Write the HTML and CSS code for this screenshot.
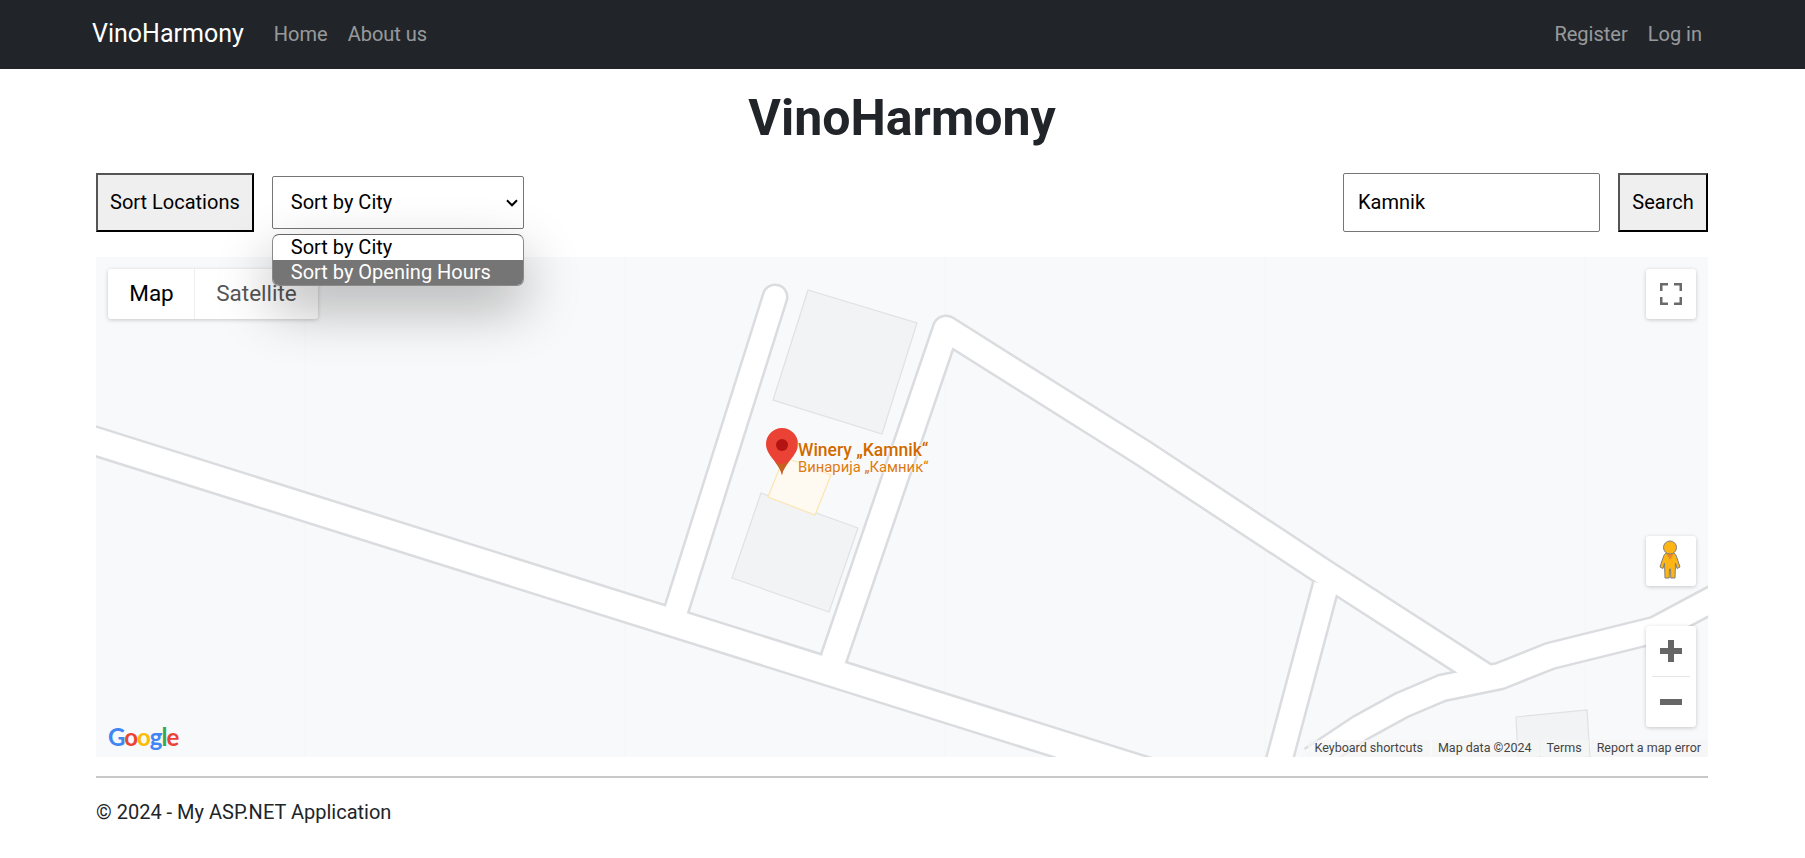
FILE: index.html
```html
<!DOCTYPE html>
<html lang="en">
<head>
  <meta charset="UTF-8" />
  <meta name="viewport" content="width=device-width, initial-scale=1" />
  <title>VinoHarmony</title>
  <link rel="stylesheet" href="styles.css">
</head>
<body>

<nav class="navbar">
  <a class="navbar-brand" href="#">VinoHarmony</a>
  <a class="nav-link" href="#">Home</a>
  <a class="nav-link" href="#">About us</a>
  <span class="nav-spacer"></span>
  <a class="nav-link" href="#">Register</a>
  <a class="nav-link" href="#">Log in</a>
</nav>

<main class="container">
  <h1 class="page-title">VinoHarmony</h1>

  <div class="toolbar">
    <div class="toolbar-group">
      <button class="btn">Sort Locations</button>
      <div class="sort-wrap">
        <select class="sort-select">
          <option>Sort by City</option>
          <option>Sort by Opening Hours</option>
        </select>
        <svg class="sort-chevron" viewBox="0 0 12 8" width="12" height="8">
          <path d="M1 1.300 L6 6.300 L11 1.300" fill="none" stroke="#000" stroke-width="2" />
        </svg>
        <div class="sort-popup">
          <div class="sort-option">Sort by City</div>
          <div class="sort-option active">Sort by Opening Hours</div>
        </div>
      </div>
    </div>
    <div class="toolbar-group search-group">
      <input class="search-input" type="text" value="Kamnik">
      <button class="btn btn-search">Search</button>
    </div>
  </div>

  <div class="map">
    <svg class="map-base" viewBox="96 257 1612 500" width="1612" height="500">
      <defs>
        <g id="roads">
          <path class="road-wide" d="M90 439.500 L1150 772.500" />
          <path class="road-cap" d="M775 297 L676 611" />
          <path class="road-mid" d="M829 672 L946 329 L1143 453 L1325 573 L1488 678" />
          <path class="road-mid" d="M1326 585 L1278 765" />
          <path class="road-mid" d="M1312 760 L1360 728 L1402 705 L1442 688 L1500 676 L1550 656 L1655 630 L1730 590" />
        </g>
      </defs>

      <!-- tile seams -->
      <path class="tile-seam" d="M305 257V757M625 257V757M945 257V757M1265 257V757M1585 257V757" />

      <polygon class="building" points="808,290 917,323 882,434 773,400" />
      <polygon class="building" points="761,493 858,528 829,612 732,578" />
      <polygon class="building" points="1516,717 1587,710 1590,757 1518,757" />
      <polygon class="lot" points="784,457 831,475 815,515 768,497" />

      <use href="#roads" class="roads-edge" />
      <use href="#roads" class="roads-fill" />

      <!-- marker -->
      <path d="M782 475 C780 463 766 456 766 444 A16 16 0 0 1 798 444 C798 456 784 463 782 475Z" fill="#ea4335" />
      <path d="M782 475 C781 470 778 466 775 462 C779 465 785 465 790 460 C787 465 783 469 782 475Z" fill="#c5621f" />
      <circle cx="782" cy="445" r="6" fill="#b31412" />
    </svg>

    <div class="poi-label">
      <div class="poi-name">Winery „Kamnik“</div>
      <div class="poi-sub">Винарија „Камник“</div>
    </div>

    <div class="map-type">
      <div class="map-type-btn selected">Map</div>
      <div class="map-type-btn">Satellite</div>
    </div>

    <div class="map-ctrl fullscreen">
      <svg viewBox="0 0 22 22" width="22" height="22">
        <path d="M1.200 8V1.200H8M14 1.200H20.800V8M20.800 14V20.800H14M8 20.800H1.200V14" fill="none" stroke="#6a6a6a" stroke-width="2.600" />
      </svg>
    </div>

    <div class="map-ctrl pegman">
      <svg viewBox="0 0 24 40" width="24" height="40">
        <path d="M8 13 Q12 11 16 13 Q18 14 19 18 L22 27 L19 28.500 L17.500 23 L17 38 L12.800 38 L12.500 29 L11.500 29 L11.200 38 L7 38 L6.500 23 L5 28.500 L2 27 L5 18 Q6 14 8 13Z" fill="#fdb515" stroke="#7f7f7f" stroke-width="1" />
        <path d="M8.500 14 L15.500 14 L12 20Z" fill="#e8892b" />
        <circle cx="12" cy="7.500" r="6.500" fill="#fdb515" stroke="#7f7f7f" stroke-width="1" />
      </svg>
    </div>

    <div class="map-ctrl zoom-ctrl">
      <button class="zoom-btn" aria-label="Zoom in">
        <svg viewBox="0 0 22 22" width="22" height="22"><path d="M0 8H8V0H14V8H22V14H14V22H8V14H0Z" fill="#666" /></svg>
      </button>
      <div class="zoom-divider"></div>
      <button class="zoom-btn" aria-label="Zoom out">
        <svg viewBox="0 0 22 22" width="22" height="22"><path d="M0 8H22V14H0Z" fill="#666" /></svg>
      </button>
    </div>

    <div class="google-logo"><span class="g-blue">G</span><span class="g-red">o</span><span class="g-yellow">o</span><span class="g-blue">g</span><span class="g-green">l</span><span class="g-red">e</span></div>

    <div class="attribution">
      <span>Keyboard shortcuts</span>
      <span>Map data ©2024</span>
      <span>Terms</span>
      <span>Report a map error</span>
    </div>
  </div>
</main>

<footer class="footer">
  <hr class="footer-rule">
  <div class="footer-text">© 2024 - My ASP.NET Application</div>
</footer>

</body>
</html>
```

FILE: styles.css
```css
* {
  box-sizing: border-box;
}
body {
  margin: 0;
  background-color: #fff;
  color: #212529;
  font-family: Roboto, "Liberation Sans", sans-serif;
  font-size: 20px;
  line-height: 1.5;
}

.navbar {
  display: flex;
  align-items: center;
  height: 69px;
  padding: 0 93px 1px 92px;
  background-color: #212529;
}
.navbar-brand {
  margin-right: 20px;
  color: #fff;
  font-size: 25px;
  text-decoration: none;
}
.nav-link {
  padding: 0 10px;
  color: rgba(255, 255, 255, 0.55);
  text-decoration: none;
}
.nav-spacer {
  flex: 1;
}

.container {
  padding: 0 97px 0 96px;
}
.page-title {
  margin: 19px 0 25px;
  font-size: 50px;
  font-weight: 700;
  line-height: 1.2;
  text-align: center;
}

.toolbar {
  display: flex;
  justify-content: space-between;
  height: 59px;
  margin-bottom: 25px;
}
.toolbar-group {
  display: flex;
  align-items: center;
  gap: 18px;
}
.btn {
  height: 59px;
  padding: 0 12px 2px;
  border: 2px solid #000;
  border-color: #555 #000 #000 #555;
  background-color: #efefef;
  color: #000;
  font-family: inherit;
  font-size: 20px;
}
.btn-search {
  width: 90px;
  padding: 0 0 2px;
}
.sort-wrap {
  position: relative;
}
.sort-select {
  display: block;
  width: 252px;
  height: 53px;
  padding: 0 30px 2px 18px;
  border: 1px solid #767676;
  border-radius: 2px;
  background-color: #fff;
  color: #000;
  font-family: inherit;
  font-size: 20px;
  appearance: none;
}
.sort-chevron {
  position: absolute;
  top: 23px;
  right: 6px;
  pointer-events: none;
}
.sort-popup {
  position: absolute;
  top: 58px;
  left: 0;
  z-index: 5;
  width: 252px;
  height: 52px;
  overflow: hidden;
  border: 1px solid #8a8a8a;
  border-top-color: #666;
  border-radius: 7px;
  background-color: #fff;
  color: #000;
  box-shadow: 0 22px 55px rgba(0, 0, 0, 0.3);
}
.sort-option {
  height: 25px;
  padding-left: 18px;
  line-height: 24px;
}
.sort-option.active {
  height: 26px;
  background-color: #757575;
  color: #fff;
}
.search-input {
  width: 257px;
  height: 59px;
  padding: 0 14px 2px;
  border: 1px solid #767676;
  border-radius: 2px;
  color: #000;
  font-family: inherit;
  font-size: 20px;
}

.map {
  position: relative;
  height: 500px;
  overflow: hidden;
  background-color: #f8f9fa;
}
.map-base {
  display: block;
}
.tile-seam {
  fill: none;
  stroke: #f5f6f7;
  stroke-width: 1;
}
.building {
  fill: #f1f3f4;
  stroke: #dfe1e5;
  stroke-width: 1.200;
}
.lot {
  fill: #fef9f1;
  stroke: #fde5b0;
  stroke-width: 1.200;
}

/* the two <use> copies only differ in colour and --edge */
.roads-edge,
.roads-fill {
  fill: none;
  stroke-linejoin: round;
}
.roads-edge {
  --edge: 5px;
  stroke: #dadce0;
}
.roads-fill {
  --edge: 0px;
  stroke: #fff;
}
.road-wide {
  stroke-width: calc(26px + var(--edge));
}
.road-cap {
  stroke-width: calc(22px + var(--edge));
  stroke-linecap: round;
}
.road-mid {
  stroke-width: calc(24px + var(--edge));
}

.poi-label {
  position: absolute;
  top: 184px;
  left: 702px;
  color: #d06a00;
  white-space: nowrap;
  text-shadow: 0 0 2px #fff, 0 0 2px #fff;
}
.poi-name {
  font-size: 17.500px;
  font-weight: 500;
  line-height: 19px;
}
.poi-sub {
  font-size: 14.800px;
  line-height: 15px;
  color: #dd7a10;
}

.map-type {
  position: absolute;
  top: 12px;
  left: 12px;
  display: flex;
  height: 50px;
  border-radius: 3px;
  background-color: #fff;
  box-shadow: 0 1px 4px rgba(0, 0, 0, 0.2);
  font-size: 22.500px;
  line-height: 48px;
}
.map-type-btn {
  width: 123px;
  color: #565656;
  text-align: center;
}
.map-type-btn.selected {
  width: 87px;
  padding-left: 1px;
  border-right: 1px solid #eee;
  color: #000;
}

.map-ctrl {
  position: absolute;
  left: 1550px;
  display: flex;
  align-items: center;
  justify-content: center;
  width: 50px;
  border-radius: 3px;
  background-color: #fff;
  box-shadow: 0 1px 4px rgba(0, 0, 0, 0.2);
}
.fullscreen {
  top: 12px;
  height: 50px;
}
.pegman {
  top: 279px;
  height: 50px;
}
.pegman svg {
  margin: 0 2px 3px 0;
}
.zoom-ctrl {
  top: 369px;
  height: 101px;
  flex-direction: column;
}
.zoom-btn {
  display: flex;
  align-items: center;
  justify-content: center;
  width: 50px;
  height: 50px;
  padding: 0;
  border: 0;
  background: none;
}
.zoom-divider {
  width: 38px;
  height: 1px;
  background-color: #e6e6e6;
}

.google-logo {
  position: absolute;
  bottom: 5px;
  left: 12px;
  font-family: Lato, sans-serif;
  font-size: 24px;
  font-weight: 700;
  letter-spacing: -1px;
  line-height: 30px;
}
.g-blue { color: #4285f4; }
.g-red { color: #ea4335; }
.g-yellow { color: #fbbc05; }
.g-green { color: #34a853; }

.attribution {
  position: absolute;
  right: 0;
  bottom: 0;
  display: flex;
  gap: 2px;
  height: 17px;
  color: #444;
  font-size: 12.500px;
  line-height: 16px;
}
.attribution span {
  padding: 0 7px 0 6px;
  background-color: rgba(245, 245, 245, 0.7);
}

.footer {
  padding: 0 97px 0 96px;
}
.footer-rule {
  height: 2px;
  margin: 19px 0 19px;
  border: 0;
  background-color: #c8c8c8;
}
.footer-text {
  line-height: 30px;
}
```
